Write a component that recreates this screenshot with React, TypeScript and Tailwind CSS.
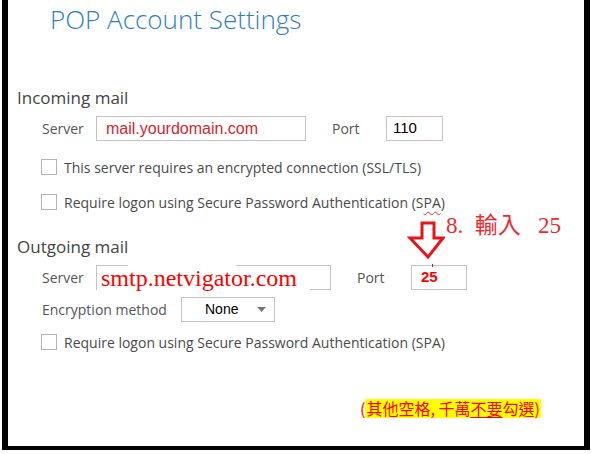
import React from 'react';

const ui = { fontFamily: '"Open Sans", "Noto Sans", sans-serif' };
const arial = { fontFamily: '"Liberation Sans", Arial, sans-serif' };
const serif = { fontFamily: '"Liberation Serif", "Noto Sans CJK TC", serif' };
const cjk = { fontFamily: '"Noto Sans CJK TC", "Noto Sans CJK SC", sans-serif' };

function Checkbox({ children }: { children: React.ReactNode }) {
  return (
    <div className="flex items-center h-[20px] pl-[33px]">
      <span className="w-[16px] h-[16px] border border-[#b4b4b4] bg-white shrink-0" />
      <span className="ml-[7px] text-[14px] text-[#4a4a4a] whitespace-nowrap">{children}</span>
    </div>
  );
}

function Label({ children, className = '' }: { children: React.ReactNode; className?: string }) {
  return <span className={`text-[14px] text-[#555] whitespace-nowrap ${className}`}>{children}</span>;
}

export default function App() {
  return (
    <div className="w-[596px] h-[454px] bg-white relative overflow-hidden" style={ui}>
      <div className="ml-[2px] w-[588px] h-[450px] border-l-[6px] border-r-[6px] border-b-[4px] border-black relative">
        {/* Title */}
        <div className="pl-[42px] pt-[3px] h-[40px] text-[26px] font-light text-[#2f7fc3] leading-[32px] whitespace-nowrap">
          POP Account Settings
        </div>

        {/* Incoming mail */}
        <div className="mt-[48px] pl-[9px] h-[20px] flex items-center text-[17px] text-[#444]">Incoming mail</div>

        <div className="mt-[8px] flex items-center h-[25px] pl-[34px]">
          <Label className="w-[54px]">Server</Label>
          <div className="w-[210px] h-[25px] border border-[#c4c4c4] flex items-center pl-[9px] text-[16px] text-[#d3262e]" style={arial}>
            mail.yourdomain.com
          </div>
          <Label className="ml-[26px] w-[54px]">Port</Label>
          <div className="w-[57px] h-[25px] border border-[#c4c4c4] flex items-center pl-[6px] text-[15px] text-black" style={arial}>
            110
          </div>
        </div>

        <div className="mt-[16px]">
          <Checkbox>This server requires an encrypted connection (SSL/TLS)</Checkbox>
        </div>
        <div className="mt-[15px]">
          <Checkbox>
            Require logon using Secure Password Authentication (S
            <span className="underline decoration-wavy decoration-1 decoration-[#e03030] underline-offset-[3px]">PA</span>)
          </Checkbox>
        </div>

        {/* Outgoing mail */}
        <div className="mt-[25px] pl-[9px] h-[20px] flex items-center text-[17px] text-[#444]">Outgoing mail</div>

        <div className="mt-[8px] flex items-center h-[25px] pl-[34px]">
          <Label className="w-[54px]">Server</Label>
          <div className="relative w-[235px] h-[25px] border border-[#c4c4c4] flex items-center pl-[4px] text-[24px] text-[#ff0000]" style={serif}>
            <span className="absolute left-[31px] top-[-1px] w-[108px] h-[2px] bg-white" />
            <span className="absolute left-0 bottom-[-1px] w-[213px] h-[2px] bg-white" />
            <span className="relative leading-[24px]">smtp.netvigator.com</span>
          </div>
          <Label className="ml-[26px] w-[54px]">Port</Label>
          <div className="relative w-[56px] h-[25px] border border-[#c4c4c4] flex items-center pl-[9px] text-[15px] font-bold text-[#ff0000]" style={arial}>
            <span className="absolute left-[20px] top-[-2px] w-[1px] h-[3px] bg-[#ff0000]" />
            25
          </div>
        </div>

        <div className="mt-[7px] flex items-center h-[25px] pl-[34px]">
          <Label className="w-[139px]">Encryption method</Label>
          <div className="w-[94px] h-[25px] border border-[#c4c4c4] flex items-center pl-[23px] pr-[8px] text-[14px] text-black" style={arial}>
            <span className="flex-1">None</span>
            <svg width="9" height="5" viewBox="0 0 9 5">
              <path d="M0 0h9L4.5 5z" fill="#777" />
            </svg>
          </div>
        </div>

        <div className="mt-[10px]">
          <Checkbox>Require logon using Secure Password Authentication (SPA)</Checkbox>
        </div>

        {/* note */}
        <div className="mt-[46px] pl-[352px] h-[20px] flex items-center text-[16px] text-[#ff0000] whitespace-nowrap" style={cjk}>
          <span>(</span>
          <span className="bg-[#ffff00] px-[1px] leading-[19px]">
            其他空格, 千萬<span className="underline underline-offset-2">不要</span>勾選)
          </span>
        </div>

        {/* annotation */}
        <svg className="absolute left-[399px] top-[221px]" width="38" height="40" viewBox="0 0 38 40">
          <path d="M15 2h12v15h9L21 36 3 17h12z" fill="white" stroke="#e8141c" strokeWidth="3" strokeLinejoin="miter" />
        </svg>
        <div className="absolute left-[438px] top-[213px] text-[23px] text-[#f0282d] whitespace-nowrap leading-[26px]" style={serif}>
          8.&nbsp; 輸入&nbsp;&nbsp; 25
        </div>
      </div>
    </div>
  );
}
